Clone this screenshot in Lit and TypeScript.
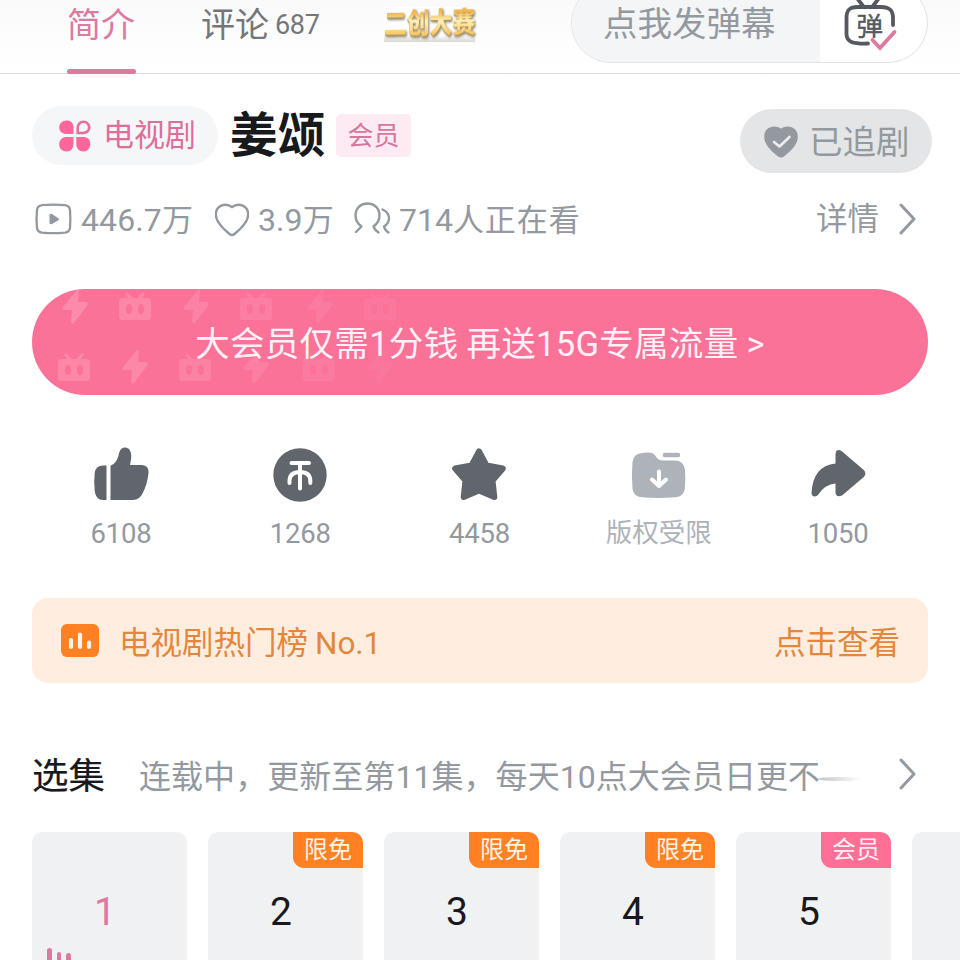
import { LitElement, html, css, svg, nothing } from "lit";
import { customElement, property } from "lit/decorators.js";

const thumb = svg`<svg width="56" height="56" viewBox="0 0 56 56" fill="#61666d">
  <path d="M13.500 19.500V54H10Q3 54 1.700 45Q.7 36 1.700 27Q2.700 19.500 10 19.500Z"/>
  <path d="M17.500 54V19.800Q23.500 17.500 25.500 9.500C26.500 4 28.500 1.500 32.500 1.500C37.500 2 39 7.500 38 13.500L37 19H49Q56 19.500 55.500 27Q54.500 38 49.500 47.500Q46.500 54 40 54Z"/></svg>`;
const coin = svg`<svg width="56" height="56" viewBox="0 0 56 56"><circle cx="28" cy="29" r="26.700" fill="#61666d"/>
  <path d="M19.500 17H37M28 17V42.500M17.500 37V34.500Q18 26 28 26Q38 26 38.300 34.500V37" fill="none" stroke="#fff" stroke-width="4" stroke-linecap="round"/></svg>`;
const star = svg`<svg width="56" height="56" viewBox="0 0 56 56"><path d="M28 5.500L35.500 19.500L51.800 22.500L41.500 34.500L43.300 51L28 44.500L12.700 51L14.500 34.500L4.200 22.500L20.500 19.500Z" fill="#61666d" stroke="#61666d" stroke-width="6" stroke-linejoin="round"/></svg>`;
const folder = svg`<svg width="56" height="56" viewBox="0 0 56 56"><path d="M12.500 7Q18.500 6.200 22 7Q24.500 8 27 12Q29 14.500 32.500 14.500H44.500Q54 14.500 55 24Q55.700 33 54.800 43Q53.700 50.500 45.500 51.300Q28.500 52.700 11.500 51.300Q3.500 50.500 2.500 43Q1.300 29 2.500 16Q3.500 7.500 12.500 7Z" fill="#aeb3b9"/>
  <path d="M35 9H48" stroke="#aeb3b9" stroke-width="4.500" stroke-linecap="round"/><path d="M29 25.500V39.500M22 33.500L29 40L36 33.500" fill="none" stroke="#fff" stroke-width="4" stroke-linecap="round" stroke-linejoin="round"/></svg>`;
const share = svg`<svg width="56" height="56" viewBox="0 0 56 56"><path d="M25.500 17.500V8.500Q26 2 31.500 5L53.800 24Q57 27.500 53.800 31L32 49.500Q26 52 25.500 46.500V37.500Q15 38 7.500 49.500Q2.500 52 1.500 47.500Q2.500 20 25.500 17.500Z" fill="#61666d"/></svg>`;
const chevron = svg`<svg width="18" height="36" viewBox="0 0 18 36"><path d="M2 4L15 18L2 32" fill="none" stroke="#9499a0" stroke-width="3" stroke-linecap="round" stroke-linejoin="round"/></svg>`;

const tv = (x: number, y: number, o: number) => svg`<g transform="translate(${x} ${y})" opacity=${o}><path fill-rule="evenodd" d="M3 6H9L6 2L8 0L14 6H18L24 0L26 2L23 6H29Q32 6 32 9V25Q32 28 29 28H3Q0 28 0 25V9Q0 6 3 6ZM10 12Q7 12 7 17Q7 22 10 22Q13 22 13 17Q13 12 10 12ZM22 12Q19 12 19 17Q19 22 22 22Q25 22 25 17Q25 12 22 12Z"/></g>`;
const bolt = (x: number, y: number, o: number) => svg`<path transform="translate(${x} ${y})" opacity=${o} d="M15 0L1 17Q-1 20 2 20H10L9 32Q10 35 12 33L25 16Q27 12 24 12H16L17 1Q17-1 15 0Z"/>`;

/* Latin runs are set in their own face; a zero line-height keeps the baseline where the Chinese font puts it. */
const latin = css`.n { font-family: Roboto, sans-serif; line-height: 0; }`;

@customElement("action-item")
class ActionItem extends LitElement {
  @property({ attribute: false }) icon: unknown = nothing;
  @property() label = "";
  @property({ type: Boolean, reflect: true }) muted = false;
  static styles = [latin, css`
    :host { display: flex; flex-direction: column; align-items: center; flex: 1; }
    svg { display: block; margin-left: -1.500px; }
    .label { margin-top: 16px; margin-left: -1px; font-size: 26.500px; line-height: 1; color: #9499a0; }
    .n { font-size: 27.500px; letter-spacing: -.2px; position: relative; top: 1px; }
    :host([muted]) .label { color: #aeb3b9; }
  `];
  render() {
    return html`${this.icon}<div class="label">${this.muted ? this.label : html`<span class="n">${this.label}</span>`}</div>`;
  }
}

@customElement("episode-card")
class EpisodeCard extends LitElement {
  @property() number = "";
  @property() badge = "";
  @property() tone = "";
  @property({ type: Boolean }) playing = false;
  static styles = [latin, css`
    :host { display: block; flex: none; width: 155px; }
    .card { position: relative; height: 160px; border-radius: 10px; background: #f0f1f3; color: #18191c; overflow: hidden; box-sizing: border-box; padding-top: 57px; text-align: center; font-size: 39px; line-height: 1; }
    .num { padding-right: 9px; }
    .playing { color: #dd7a9e; }
    .badge { position: absolute; right: 0; top: 0; width: 70px; height: 36px; box-sizing: border-box; padding-top: 4px; border-radius: 0 10px 0 11px; font-size: 24px; color: #fff4e8; background: #ff8124; }
    .vip { background: #ff6f96; color: #fff0f5; }
    .bars { position: absolute; left: 15px; top: 116px; display: flex; gap: 5px; align-items: flex-start; }
    .bars i { width: 4.500px; height: 30px; border-radius: 3px; background: #dd7a9e; }
    .bars i:nth-child(2) { margin-top: 4px; }
    .bars i:nth-child(3) { margin-top: 5px; }
  `];
  render() {
    return html`<div class="card ${this.playing ? "playing" : ""}">
      <div class="num"><span class="n">${this.number}</span></div>
      ${this.badge ? html`<span class="badge ${this.tone}">${this.badge}</span>` : nothing}
      ${this.playing ? html`<div class="bars"><i></i><i></i><i></i></div>` : nothing}
    </div>`;
  }
}

@customElement("app-root")
class AppRoot extends LitElement {
  static styles = [latin, css`
    :host { display: block; width: 960px; height: 960px; overflow: hidden; background: #fff; font-family: "Noto Sans CJK SC", sans-serif; color: #9499a0; }
    svg { display: block; flex: none; }
    .t { line-height: 1; margin-top: -.112em; white-space: nowrap; flex: none; }
    .row { display: flex; align-items: center; }
    header { display: flex; height: 74px; box-sizing: border-box; border-bottom: 1px solid #dedfe0; background: linear-gradient(#fafafb, #fff); padding-left: 67px; }
    .tab { position: relative; width: 69px; height: 49px; font-size: 34px; color: #dd7a9e; margin-right: 65px; }
    .tab::after { content: ""; position: absolute; left: 0; top: 69px; width: 69px; height: 5px; border-radius: 3px; background: #dd7a9e; }
    .comments { height: 50px; width: 183px; font-size: 34px; color: #74777a; }
    .count { font-size: 27px; letter-spacing: -.3px; margin: -6px 0 0 6px; }
    .contest { position: relative; width: 91px; height: 35px; margin-top: 7px; background: linear-gradient(#fff 80%, #d8d6d2); }
    .contest span { position: absolute; left: 0; top: 4px; font-size: 22.800px; line-height: 1; font-weight: 900; white-space: nowrap; transform: scaleY(1.25) skewY(-1deg); color: transparent; background: linear-gradient(#f0b84c 15%, #fff0b8 45%, #ffdf90 65%, #f7c662 90%); background-clip: text; -webkit-background-clip: text; filter: drop-shadow(0 1px 0 #b3935a) drop-shadow(1px 1px 1px #8a8372); }
    .danmu { margin: -17px 0 0 96px; width: 357px; height: 80px; box-sizing: border-box; border: 1.500px solid #e1e3e7; border-radius: 40px; overflow: hidden; display: flex; background: #fff; }
    .danmu .hint { width: 248px; box-sizing: border-box; height: 78px; padding-left: 31px; font-size: 34.500px; background: #f4f5f7; }
    .danmu svg { margin: 14px 0 0 23px; }
    main { padding: 0 32px; }
    .title { display: flex; height: 67px; margin-top: 32px; align-items: flex-start; }
    .kind { width: 186px; height: 59px; border-radius: 30px; background: #f5f6f8; box-sizing: border-box; padding-left: 26px; font-size: 31px; color: #dd6f98; }
    .kind svg { margin: 1px 11px 0 0; }
    .kind .t { margin-top: -6px; }
    h1 { font-size: 47.500px; font-weight: 700; color: #18191c; margin: 4px 0 0 12px; line-height: 1; width: 106px; height: 48px; display: flex; align-items: center; }
    .vip { width: 75px; height: 43px; margin-top: 8px; border-radius: 5px; background: #feeaf2; color: #d6779d; font-size: 26px; justify-content: center; }
    .follow { margin: 3px -4px 0 auto; width: 192px; height: 64px; border-radius: 32px; background: #e3e5e7; box-sizing: border-box; padding-left: 24px; font-size: 33.500px; }
    .follow svg { margin: 2px 11px 0 0; }
    .follow .t { margin-top: -2px; }
    .stats { height: 36px; margin-top: 28px; font-size: 31px; }
    .views { letter-spacing: .5px; margin-left: 9px; width: 134px; }
    .likes { letter-spacing: .4px; margin-left: 9px; width: 95px; }
    .online { margin-left: 8px; letter-spacing: .9px; }
    .online .n { letter-spacing: 0; }
    .stats .n { font-size: 32px; }
    .views .n { letter-spacing: .1px; }
    .likes .n { letter-spacing: .1px; }
    .detail { margin-left: auto; margin-right: 20px; font-size: 31.500px; }
    .stats > svg:last-child { margin-right: 11px; }
    .promo { position: relative; height: 106px; margin-top: 52px; border-radius: 53px; background: #fb7299; color: #fff1f6; font-size: 34.500px; overflow: hidden; justify-content: center; }
    .promo svg { position: absolute; left: 0; top: 0; }
    .promo .t { position: relative; letter-spacing: .3px; margin-top: -1px; }
    .actions { display: flex; margin-top: 51px; height: 152px; }
    .rank { height: 85px; border-radius: 16px; background: #ffeee0; color: #e3873c; font-size: 31.500px; box-sizing: border-box; padding: 4px 28px 0 29px; }
    .rank svg { margin: -4px 20px 0 0; }
    .rank .no { margin-left: 7px; letter-spacing: -.1px; }
    .rank .more { margin-left: auto; }
    .eps { height: 40px; margin-top: 73px; }
    .eps h2 { font-size: 36.500px; font-weight: 400; -webkit-text-stroke: .2px #18191c; color: #18191c; margin: -.08em 34px 0 0; line-height: 1; }
    .eps .note { font-size: 32px; letter-spacing: .05px; }
    .wisp { width: 44px; height: 4px; margin: 6px 0 0 -2px; border-radius: 50%; background: linear-gradient(90deg, #c2c4c7, #fff); }
    .eps > svg { margin: -4px 11px 0 auto; }
    .list { display: flex; gap: 21px; margin-top: 36px; }
  `];
  render() {
    const n = (s: string) => html`<span class="n">${s}</span>`;
    return html`
      <header>
        <div class="tab row"><span class="t">简介</span></div>
        <div class="comments row"><span class="t">评论</span><span class="t count">${n("687")}</span></div>
        <div class="contest"><span>二创大赛</span></div>
        <div class="danmu">
          <div class="hint row"><span class="t">点我发弹幕</span></div>
          <svg width="58" height="56" viewBox="0 0 58 56">
            <g fill="none" stroke="#55595f" stroke-width="3.800" stroke-linecap="round" stroke-linejoin="round">
              <path d="M14 0L20 8M36 0L30 8"/>
              <path d="M25 45.500C10 46 3.500 44 3.500 36V20C3.500 12 6.500 9 14.500 9H38C46 9 49.500 11.500 50 19V27"/>
            </g>
            <text x="13.500" y="37.500" font-size="26.500" fill="#55595f" stroke="#55595f" stroke-width=".4">弹</text>
            <path d="M29.500 42L38 50L53 34" fill="none" stroke="#fff" stroke-width="7"/>
            <path d="M29.500 42L37 50L51.500 34" fill="none" stroke="#dd7a9e" stroke-width="3.800" stroke-linecap="round"/>
          </svg>
        </div>
      </header>
      <main>
        <section class="title">
          <div class="kind row">
            <svg width="34" height="34" viewBox="0 0 34 34" fill="#ff6699">
              <path d="M8.300 1.500C13 1.500 15.500 4 15.500 9V15H9C4 15 1.200 12.500 1.200 8.500C1.200 4.500 4.500 1.500 8.300 1.500Z"/>
              <path d="M9 18H15.500V24C15.500 29.500 13 32.500 8.500 32.500C4.200 32.500 1.200 29.500 1.200 25.500C1.200 20.500 4.500 18 9 18Z"/>
              <path d="M18.300 18H25C29.500 18 32.300 20.500 32.300 25C32.300 29.500 29 32.500 25.500 32.500C21 32.500 18.300 29.500 18.300 25Z"/>
              <path d="M19.700 14V9C19.700 5.500 22 2.800 25.500 2.800C28.600 2.800 31.200 5.300 31.200 8.500C31.200 12 28.500 14 25 14Z" fill="none" stroke="#e6709a" stroke-width="2.600"/>
            </svg>
            <span class="t">电视剧</span>
          </div>
          <h1><span class="t">姜颂</span></h1>
          <div class="vip row"><span class="t">会员</span></div>
          <div class="follow row">
            <svg width="34" height="34" viewBox="0 0 34 34"><path d="M17 3.500C10-1 0 2 .2 12C.3 19 6 25 14 31.500Q17 33.500 20 31.500C28 25 33.700 19 33.800 12C34 2 24-1 17 3.500Z" fill="#9499a0"/><path d="M10 17L15.500 21.500L25.500 12" fill="none" stroke="#eceef0" stroke-width="2.600" stroke-linecap="round" stroke-linejoin="round"/></svg>
            <span class="t">已追剧</span>
          </div>
        </section>
        <section class="stats row">
          <svg width="40" height="36" viewBox="0 0 40 36"><path d="M10 4.200Q21 3 33 4.200Q37.500 4.800 38 9Q38.700 18 38 27Q37.500 31 33 31.600Q21 32.800 10 31.600Q5.500 31 5 27Q4 18 5 9Q5.500 4.800 10 4.200Z" fill="none" stroke="#9499a0" stroke-width="2.300"/><path d="M17.500 14.500Q17.500 12 20 13L26 17Q28 18 26 19.500L20 23Q17.500 24 17.500 21.500Z" fill="#9499a0"/></svg>
          <span class="t views">${n("446.7")}万</span>
          <svg width="34" height="36" viewBox="0 0 34 36"><path d="M17 6C10 1 .8 5 .8 13.500C.8 20.500 6.500 26.500 14.500 33Q17 35 19.500 33C27.500 26.500 33.200 20.500 33.200 13.500C33.200 5 24 1 17 6Z" fill="none" stroke="#9499a0" stroke-width="2.400"/></svg>
          <span class="t likes">${n("3.9")}万</span>
          <svg width="38" height="36" viewBox="0 0 38 36" fill="none" stroke="#9499a0" stroke-width="2.400" stroke-linecap="round" stroke-linejoin="round"><path d="M3 31L8.500 25.500C5 23 2.500 19.500 2.500 14.500C2.500 7.500 7.500 2.500 14.500 2.500C21.500 2.500 26.500 7.500 26.500 14.500C26.500 19.500 24 23 20.500 25.500Q22 29.500 25.500 31.500M29.500 8.500C34 10.500 36 13.500 36 17.500C36 21 34 23.500 31 25.500Q32 29.500 35.500 31.500"/></svg>
          <span class="t online">${n("714")}人正在看</span>
          <span class="t detail">详情</span>
          ${chevron}
        </section>
        <section class="promo row">
          <svg width="400" height="106" viewBox="0 0 400 106" fill="#ffb3c8">
            ${bolt(30, 1, 0.36)}${tv(87, 3, 0.32)}${bolt(151, 1, 0.26)}${tv(208, 3, 0.2)}${bolt(275, 1, 0.14)}${tv(332, 3, 0.08)}
            ${tv(26, 64, 0.32)}${bolt(90, 61, 0.32)}${tv(147, 64, 0.25)}${bolt(211, 61, 0.2)}${tv(271, 64, 0.13)}${bolt(335, 61, 0.06)}
          </svg>
          <span class="t">大会员仅需${n("1")}分钱 再送${n("15G")}专属流量 ${n(">")}</span>
        </section>
        <section class="actions">
          <action-item .icon=${thumb} label="6108"></action-item>
          <action-item .icon=${coin} label="1268"></action-item>
          <action-item .icon=${star} label="4458"></action-item>
          <action-item .icon=${folder} label="版权受限" muted></action-item>
          <action-item .icon=${share} label="1050"></action-item>
        </section>
        <section class="rank row">
          <svg width="38" height="33" viewBox="0 0 38 33"><rect width="38" height="33" rx="6" fill="#ff8124"/><path d="M10 16V23M19 10.500V23M28 18.500V23" stroke="#fff4e8" stroke-width="4.200" stroke-linecap="round"/></svg>
          <span class="t">电视剧热门榜</span><span class="t no">${n("No.1")}</span>
          <span class="t more">点击查看</span>
        </section>
        <section class="eps row">
          <h2>选集</h2>
          <span class="t note">连载中，更新至第${n("11")}集，每天${n("10")}点大会员日更不</span>
          <i class="wisp"></i>
          ${chevron}
        </section>
        <section class="list">
          <episode-card number="1" playing></episode-card>
          <episode-card number="2" badge="限免"></episode-card>
          <episode-card number="3" badge="限免"></episode-card>
          <episode-card number="4" badge="限免"></episode-card>
          <episode-card number="5" badge="会员" tone="vip"></episode-card>
          <episode-card></episode-card>
        </section>
      </main>
    `;
  }
}
